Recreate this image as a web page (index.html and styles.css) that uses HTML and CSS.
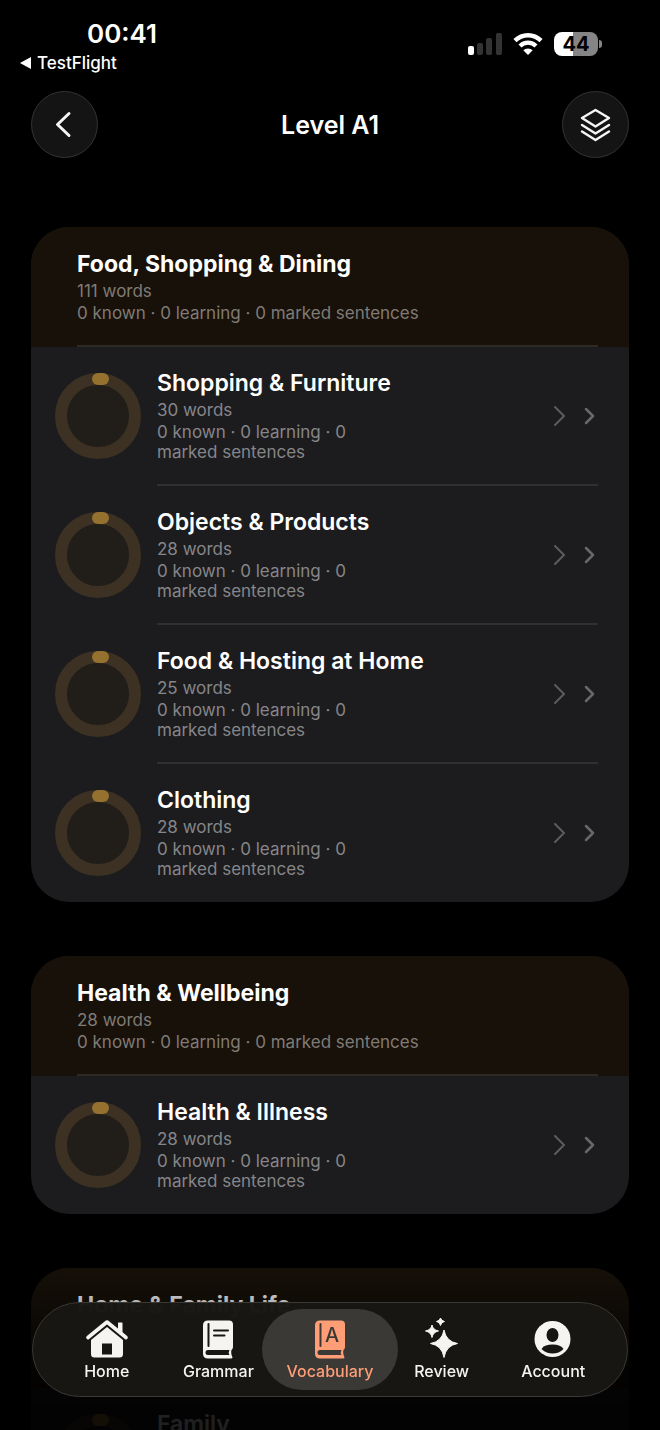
FILE: index.html
```
<!DOCTYPE html>
<html lang="en">
<head>
    <meta charset="UTF-8">
    <meta name="viewport" content="width=device-width, initial-scale=1.0">
    <title>Level A1</title>
    <link rel="stylesheet" href="styles.css">
</head>
<body>
    <!-- shared shapes -->
    <svg class="sprite" aria-hidden="true">
        <symbol id="ring" viewBox="0 0 86 86">
            <circle cx="43" cy="43" r="37" fill="#211e1a" stroke="#3c3122" stroke-width="12"/>
            <path d="M43 6 H48" fill="none" stroke="#957130" stroke-width="12" stroke-linecap="round"/>
        </symbol>
        <symbol id="arrows" viewBox="0 0 44 24">
            <path d="M1 3 L10 12 L1 21" fill="none" stroke="#5c5c5e" stroke-width="2" stroke-linecap="round" stroke-linejoin="round"/>
            <path d="M32 5 L39 12 L32 19" fill="none" stroke="#68686b" stroke-width="2.500" stroke-linecap="round" stroke-linejoin="round"/>
        </symbol>
    </svg>

    <div class="app">
        <div class="status-bar">
            <div class="status-left">
                <span class="time">00:41</span>
                <a href="#" class="back-app"><svg width="11" height="12" viewBox="0 0 11 12"><path d="M0 6 L11 0 V12 Z" fill="#fff"/></svg>TestFlight</a>
            </div>
            <div class="status-right">
                <svg width="34" height="22" viewBox="0 0 34 22">
                    <rect x="0" y="13" width="6" height="9" rx="2" fill="#fff"/>
                    <rect x="9" y="10" width="6" height="12" rx="2" fill="#333"/>
                    <rect x="18" y="5" width="6" height="17" rx="2" fill="#333"/>
                    <rect x="28" y="0" width="6" height="22" rx="2" fill="#333"/>
                </svg>
                <svg width="30" height="22" viewBox="0 0 30 22">
                    <path d="M2 7.6 A18.4 18.4 0 0 1 28 7.6" fill="none" stroke="#fff" stroke-width="4.4"/>
                    <path d="M7 13 A11.3 11.3 0 0 1 23 13" fill="none" stroke="#fff" stroke-width="4.2"/>
                    <path d="M15 22 L10.3 17.3 A6.8 6.8 0 0 1 19.7 17.3 Z" fill="#fff"/>
                </svg>
                <div class="battery">44</div>
            </div>
        </div>

        <header class="nav">
            <button class="round-btn" aria-label="Back">
                <svg width="18" height="28" viewBox="0 0 18 28"><path d="M13 2.500 L1.500 13.500 L13 24.500" fill="none" stroke="#f5f5f5" stroke-width="3" stroke-linecap="round" stroke-linejoin="round"/></svg>
            </button>
            <h1>Level A1</h1>
            <button class="round-btn" aria-label="Levels">
                <svg width="32" height="34" viewBox="0 0 32 34" fill="none" stroke="#f5f5f5" stroke-width="2.400" stroke-linecap="round" stroke-linejoin="round">
                    <path d="M15.500 2 L29 10 L15.500 18.500 L2 10 Z"/>
                    <path d="M2 17 L15.500 25.500 L29 17"/>
                    <path d="M2 23.500 L15.500 32 L29 23.500"/>
                </svg>
            </button>
        </header>

        <main class="groups">
            <section class="group">
                <div class="group-header">
                    <h2>Food, Shopping &amp; Dining</h2>
                    <p>111 words</p>
                    <p>0 known · 0 learning · 0 marked sentences</p>
                </div>
                <a href="#" class="topic">
                    <svg class="ring"><use href="#ring"/></svg>
                    <div class="topic-body">
                        <div class="topic-text">
                            <h3>Shopping &amp; Furniture</h3>
                            <p>30 words</p>
                            <p class="progress">0 known · 0 learning · 0 marked sentences</p>
                        </div>
                        <svg class="arrows"><use href="#arrows"/></svg>
                    </div>
                </a>
                <a href="#" class="topic">
                    <svg class="ring"><use href="#ring"/></svg>
                    <div class="topic-body">
                        <div class="topic-text">
                            <h3>Objects &amp; Products</h3>
                            <p>28 words</p>
                            <p class="progress">0 known · 0 learning · 0 marked sentences</p>
                        </div>
                        <svg class="arrows"><use href="#arrows"/></svg>
                    </div>
                </a>
                <a href="#" class="topic">
                    <svg class="ring"><use href="#ring"/></svg>
                    <div class="topic-body">
                        <div class="topic-text">
                            <h3>Food &amp; Hosting at Home</h3>
                            <p>25 words</p>
                            <p class="progress">0 known · 0 learning · 0 marked sentences</p>
                        </div>
                        <svg class="arrows"><use href="#arrows"/></svg>
                    </div>
                </a>
                <a href="#" class="topic">
                    <svg class="ring"><use href="#ring"/></svg>
                    <div class="topic-body">
                        <div class="topic-text">
                            <h3>Clothing</h3>
                            <p>28 words</p>
                            <p class="progress">0 known · 0 learning · 0 marked sentences</p>
                        </div>
                        <svg class="arrows"><use href="#arrows"/></svg>
                    </div>
                </a>
            </section>

            <section class="group">
                <div class="group-header">
                    <h2>Health &amp; Wellbeing</h2>
                    <p>28 words</p>
                    <p>0 known · 0 learning · 0 marked sentences</p>
                </div>
                <a href="#" class="topic">
                    <svg class="ring"><use href="#ring"/></svg>
                    <div class="topic-body">
                        <div class="topic-text">
                            <h3>Health &amp; Illness</h3>
                            <p>28 words</p>
                            <p class="progress">0 known · 0 learning · 0 marked sentences</p>
                        </div>
                        <svg class="arrows"><use href="#arrows"/></svg>
                    </div>
                </a>
            </section>

            <section class="group">
                <div class="group-header">
                    <h2>Home &amp; Family Life</h2>
                    <p>128 words</p>
                    <p>0 known · 0 learning · 0 marked sentences</p>
                </div>
                <a href="#" class="topic">
                    <svg class="ring"><use href="#ring"/></svg>
                    <div class="topic-body">
                        <div class="topic-text">
                            <h3>Family</h3>
                        </div>
                    </div>
                </a>
            </section>
        </main>

        <div class="fade"></div>
        <nav class="tab-bar">
            <a href="#" class="tab">
                <svg width="42" height="40" viewBox="0 0 42 40">
                    <path d="M32 4 Q32 3.500 32.500 3.500 H36 Q36.500 3.500 36.500 4 V15 L32 11 Z" fill="#f5f4f0"/>
                    <path d="M2 18.500 L21 3 L40 18.500" fill="none" stroke="#f5f4f0" stroke-width="3.600" stroke-linecap="round" stroke-linejoin="round"/>
                    <path fill-rule="evenodd" d="M21 8 L37 21 V35 Q37 38.500 33.500 38.500 H8.500 Q5 38.500 5 35 V21 Z M16 24.500 V35.500 H26 V24.500 Z" fill="#f5f4f0"/>
                </svg>
                Home
            </a>
            <a href="#" class="tab">
                <svg width="42" height="40" viewBox="0 0 42 40">
                    <path d="M11 1.500 H32 Q36 1.500 36 5.500 V28 Q36 30 34.500 31 Q33.500 34 35.500 38.500 Q35.500 39.500 34 39.500 H11 Q6 39.500 6 34.500 V6.500 Q6 1.500 11 1.500 Z" fill="#f5f4f0"/>
                    <path d="M11.500 5 V27" stroke="#171612" stroke-width="2" stroke-linecap="round"/>
                    <path d="M11 31 H32.500 Q31 33.500 32.500 36 H11 Q8.500 36 8.500 33.500 Q8.500 31 11 31 Z" fill="#171612"/>
                    <path d="M17 11.500 H31 M17 16.500 H27.500" stroke="#171612" stroke-width="2" stroke-linecap="round"/>
                </svg>
                Grammar
            </a>
            <a href="#" class="tab active">
                <svg width="42" height="40" viewBox="0 0 42 40">
                    <path d="M11 1.500 H32 Q36 1.500 36 5.500 V28 Q36 30 34.500 31 Q33.500 34 35.500 38.500 Q35.500 39.500 34 39.500 H11 Q6 39.500 6 34.500 V6.500 Q6 1.500 11 1.500 Z" fill="#ff9d76"/>
                    <path d="M11.500 5 V27" stroke="#3a3936" stroke-width="2" stroke-linecap="round"/>
                    <path d="M11 31 H32.500 Q31 33.500 32.500 36 H11 Q8.500 36 8.500 33.500 Q8.500 31 11 31 Z" fill="#3a3936"/>
                    <text x="23" y="23" text-anchor="middle" class="book-letter">A</text>
                </svg>
                Vocabulary
            </a>
            <a href="#" class="tab">
                <svg width="42" height="40" viewBox="0 0 42 40" fill="#f5f4f0">
                    <path d="M23 11 Q25 22.500 36.500 24.500 Q25 26.500 23 38.500 Q21 26.500 9.500 24.500 Q21 22.500 23 11 Z" stroke="#f5f4f0" stroke-linejoin="round"/>
                    <path d="M11 6 Q12 11 17.500 12 Q12 13 11 18.500 Q10 13 4.500 12 Q10 11 11 6 Z" stroke="#f5f4f0" stroke-linejoin="round"/>
                    <path d="M19.500 -1 Q20.300 2 23.500 2.500 Q20.300 3 19.500 6.500 Q18.700 3 15.500 2.500 Q18.700 2 19.500 -1 Z" stroke="#f5f4f0" stroke-linejoin="round"/>
                </svg>
                Review
            </a>
            <a href="#" class="tab">
                <svg width="42" height="40" viewBox="0 0 42 40">
                    <circle cx="20.500" cy="20" r="18" fill="#f5f4f0"/>
                    <ellipse cx="20.500" cy="16" rx="6" ry="7" fill="#171612"/>
                    <path d="M9.500 30 Q12 25.500 20.500 25.500 Q29 25.500 31.500 30 Q27 34.500 20.500 34.500 Q14 34.500 9.500 30 Z" fill="#171612"/>
                </svg>
                Account
            </a>
        </nav>
    </div>
</body>
</html>
```
FILE: styles.css
```
* {
    box-sizing: border-box;
}
body {
    font-family: Inter, "Liberation Sans", sans-serif;
    background: #000;
    color: #fff;
    margin: 0;
}
h1, h2, h3, p {
    margin: 0;
}
a {
    color: inherit;
    text-decoration: none;
}
svg {
    display: block;
    overflow: visible;
}
.sprite {
    position: absolute;
    width: 0;
    height: 0;
}
.app {
    display: flex;
    flex-direction: column;
    height: 100vh;
    overflow: hidden;
}

/* status bar */
.status-bar {
    display: flex;
    flex-shrink: 0;
    justify-content: space-between;
    padding: 20px 58px 18px 20px;
}
.time {
    display: block;
    padding-left: 67px;
    font-size: 26px;
    font-weight: 600;
    line-height: 28px;
}
.back-app {
    display: flex;
    align-items: center;
    gap: 6px;
    margin-top: 5px;
    font-size: 17px;
    font-weight: 500;
    line-height: 20px;
}
.status-right {
    display: flex;
    align-items: center;
    align-self: flex-start;
    gap: 11px;
    padding-top: 12px;
}
.battery {
    position: relative;
    width: 44px;
    height: 24px;
    margin-right: 4px;
    border-radius: 8px;
    background: linear-gradient(90deg, #fff 44%, #858585 44%);
    color: #000;
    font-size: 20px;
    font-weight: 700;
    line-height: 24px;
    text-align: center;
}
.battery::after {
    content: "";
    position: absolute;
    left: 45px;
    top: 8px;
    width: 3px;
    height: 8px;
    border-radius: 0 4px 4px 0;
    background: #858585;
}

/* title and round buttons */
.nav {
    display: flex;
    flex-shrink: 0;
    align-items: center;
    justify-content: space-between;
    padding: 0 31px;
}
.nav h1 {
    font-size: 25px;
    font-weight: 600;
    line-height: 28px;
}
.round-btn {
    display: flex;
    align-items: center;
    justify-content: center;
    width: 67px;
    height: 67px;
    padding: 0;
    border: 1px solid #333;
    border-radius: 50%;
    background: #141414;
}

/* word groups */
.groups {
    flex: 1;
    min-height: 0;
    padding: 69px 31px 0;
    overflow-y: auto;
    scrollbar-width: none;
}
.group {
    margin-bottom: 54px;
    border-radius: 38px;
    background: #1c1c1e;
    overflow: hidden;
}
.group-header {
    position: relative;
    height: 120px;
    padding: 23px 31px 0 46px;
    background: #171109;
}
.group-header::after {
    content: "";
    position: absolute;
    left: 46px;
    right: 31px;
    bottom: 0;
    height: 2px;
    background: #2d2a26;
}
.group h2, .group h3 {
    margin-bottom: 2px;
    font-size: 23px;
    font-weight: 600;
    line-height: 28px;
}
.group h2 {
    font-weight: 700;
}
.group p {
    color: #86868a;
    font-size: 17px;
    line-height: 22px;
}
.group .group-header p {
    color: #807b76;
}
.topic {
    display: flex;
    align-items: center;
    gap: 16px;
    height: 139px;
    padding: 0 31px 0 24px;
}
.topic:last-child {
    height: 138px;
}
.ring {
    flex-shrink: 0;
    width: 86px;
    height: 86px;
    margin-bottom: 1px;
}
.topic-body {
    display: flex;
    flex: 1;
    align-items: center;
    justify-content: space-between;
    height: 100%;
    border-bottom: 2px solid #303032;
}
.topic:last-child .topic-body {
    border-bottom: none;
}
.topic-text {
    align-self: flex-start;
    padding-top: 22px;
}
.group .progress {
    max-width: 220px;
    line-height: 20px;
    margin-top: 1px;
}
.arrows {
    width: 44px;
    height: 24px;
}

/* bottom tabs */
.fade {
    position: fixed;
    left: 0;
    right: 0;
    bottom: 0;
    height: 170px;
    background: linear-gradient(rgba(0, 0, 0, 0), rgba(0, 0, 0, 0.3) 25%, rgba(0, 0, 0, 0.85) 75%, rgba(0, 0, 0, 0.88));
}
.tab-bar {
    position: fixed;
    left: 32px;
    right: 32px;
    bottom: 33px;
    display: grid;
    grid-template-columns: repeat(5, 1fr);
    height: 95px;
    padding: 6px 18px;
    border: 1px solid #3a3934;
    border-radius: 48px;
    background: rgba(23, 22, 18, 0.98);
}
.tab {
    display: flex;
    flex-direction: column;
    align-items: center;
    gap: 2px;
    padding-top: 10px;
    border-radius: 41px;
    color: #f5f4f0;
    font-size: 16px;
    font-weight: 500;
    line-height: 20px;
}
.tab.active {
    margin: 0 -12px;
    background: #3a3936;
    color: #ff9d76;
}
.book-letter {
    fill: #3a3936;
    font-size: 20px;
    font-weight: 500;
}
```
